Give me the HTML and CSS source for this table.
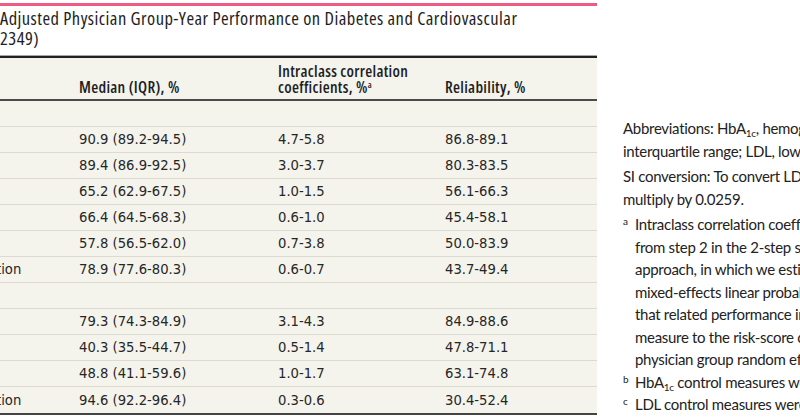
FILE: index.html
```html
<!DOCTYPE html>
<html lang="en">
<head>
<meta charset="utf-8">
<title>Adjusted Physician Group-Year Performance</title>
<link rel="stylesheet" href="styles.css">
</head>
<body>
<div class="page">
  <section class="figure">
    <div class="accent"></div>
    <h1 class="title"><span class="tline">Adjusted Physician Group-Year Performance on Diabetes and Cardiovascular</span><span class="tline">2349)</span></h1>
    <div class="table">
      <div class="row head">
        <div class="cell"></div>
        <div class="cell">Median (IQR), %</div>
        <div class="cell">Intraclass correlation<br>coefficients, %<sup class="sup">a</sup></div>
        <div class="cell">Reliability, %</div>
      </div>
      <div class="row"></div>
      <div class="row"><div class="cell label"></div><div class="cell">90.9 (89.2-94.5)</div><div class="cell">4.7-5.8</div><div class="cell">86.8-89.1</div></div>
      <div class="row"><div class="cell label"></div><div class="cell">89.4 (86.9-92.5)</div><div class="cell">3.0-3.7</div><div class="cell">80.3-83.5</div></div>
      <div class="row"><div class="cell label"></div><div class="cell">65.2 (62.9-67.5)</div><div class="cell">1.0-1.5</div><div class="cell">56.1-66.3</div></div>
      <div class="row"><div class="cell label"></div><div class="cell">66.4 (64.5-68.3)</div><div class="cell">0.6-1.0</div><div class="cell">45.4-58.1</div></div>
      <div class="row"><div class="cell label"></div><div class="cell">57.8 (56.5-62.0)</div><div class="cell">0.7-3.8</div><div class="cell">50.0-83.9</div></div>
      <div class="row"><div class="cell label">tion</div><div class="cell">78.9 (77.6-80.3)</div><div class="cell">0.6-0.7</div><div class="cell">43.7-49.4</div></div>
      <div class="row"></div>
      <div class="row"><div class="cell label"></div><div class="cell">79.3 (74.3-84.9)</div><div class="cell">3.1-4.3</div><div class="cell">84.9-88.6</div></div>
      <div class="row"><div class="cell label"></div><div class="cell">40.3 (35.5-44.7)</div><div class="cell">0.5-1.4</div><div class="cell">47.8-71.1</div></div>
      <div class="row"><div class="cell label"></div><div class="cell">48.8 (41.1-59.6)</div><div class="cell">1.0-1.7</div><div class="cell">63.1-74.8</div></div>
      <div class="row"><div class="cell label">tion</div><div class="cell">94.6 (92.2-96.4)</div><div class="cell">0.3-0.6</div><div class="cell">30.4-52.4</div></div>
    </div>
  </section>
  <aside class="notes">
    <p class="para">Abbreviations: HbA<sub class="sub">1c</sub>, hemoglobin A<sub class="sub">1c</sub>; IQR,<br>interquartile range; LDL, low-density lipoprotein.</p>
    <p class="para">SI conversion: To convert LDL to millimoles per liter,<br>multiply by 0.0259.</p>
    <div class="fn"><span class="mark">a</span><p class="fnbody">Intraclass correlation coefficients were estimated<br>from step 2 in the 2-step score construction<br>approach, in which we estimated a<br>mixed-effects linear probability model<br>that related performance in each<br>measure to the risk-score components and<br>physician group random effects.</p></div>
    <div class="fn"><span class="mark">b</span><p class="fnbody">HbA<sub class="sub">1c</sub> control measures were defined as</p></div>
    <div class="fn"><span class="mark">c</span><p class="fnbody">LDL control measures were defined as</p></div>
  </aside>
</div>
</body>
</html>
```

FILE: styles.css
```css
html, body {
  margin: 0;
  padding: 0;
}
body {
  width: 800px;
  height: 419px;
  overflow: hidden;
  background: #ffffff;
  color: #222222;
}
.page {
  display: flex;
  height: 419px;
}
.figure {
  width: 597px;
  flex: none;
}
.accent {
  height: 3px;
  margin-top: 3px;
  background: #ef5a82;
}
.title {
  margin: 2px 0 8px;
  font-family: "Open Sans", Lato, sans-serif;
  font-weight: 400;
  font-stretch: 75%;
  font-size: 18.5px;
  letter-spacing: 0.45px;
  line-height: 20px;
  color: #1e1e1e;
}
.tline {
  display: block;
  white-space: nowrap;
}
.table {
  background: #f4f3ec;
  border-top: 2px solid #222222;
  border-bottom: 2px solid #444444;
  box-shadow: 0 -1px 0 #a8a8a8;
}
.row {
  display: grid;
  grid-template-columns: 79px 199px 167px 1fr;
  align-items: center;
  height: 26px;
  box-sizing: border-box;
  border-bottom: 1px solid #dddbd1;
  font-family: "DejaVu Sans", Verdana, sans-serif;
  font-size: 13.2px;
  line-height: 25px;
  color: #262626;
  white-space: nowrap;
}
.row:last-child {
  border-bottom: none;
}
.label {
  text-indent: -4px;
}
.row.head {
  height: 43px;
  align-items: end;
  padding-bottom: 4px;
  border-bottom: 2px solid #4a4a4a;
  font-family: "Open Sans", sans-serif;
  font-weight: 600;
  font-stretch: 75%;
  font-size: 16px;
  letter-spacing: 0.3px;
  line-height: 16px;
  color: #1e1e1e;
}
.sup {
  font-size: 9px;
  line-height: 0;
  vertical-align: 5px;
  letter-spacing: 0;
}
.notes {
  flex: 1;
  min-width: 0;
  overflow: hidden;
  padding: 117px 0 0 26px;
  font-family: Lato, "Open Sans", sans-serif;
  font-size: 15px;
  letter-spacing: -0.3px;
  line-height: 22.5px;
  color: #222222;
  white-space: nowrap;
}
.para {
  margin: 0 0 3px;
}
.sub {
  font-size: 10px;
  line-height: 0;
  vertical-align: -3px;
}
.fn {
  display: flex;
}
.mark {
  flex: none;
  width: 12px;
  font-size: 10px;
  line-height: 16px;
}
.fnbody {
  margin: 0;
}
```
